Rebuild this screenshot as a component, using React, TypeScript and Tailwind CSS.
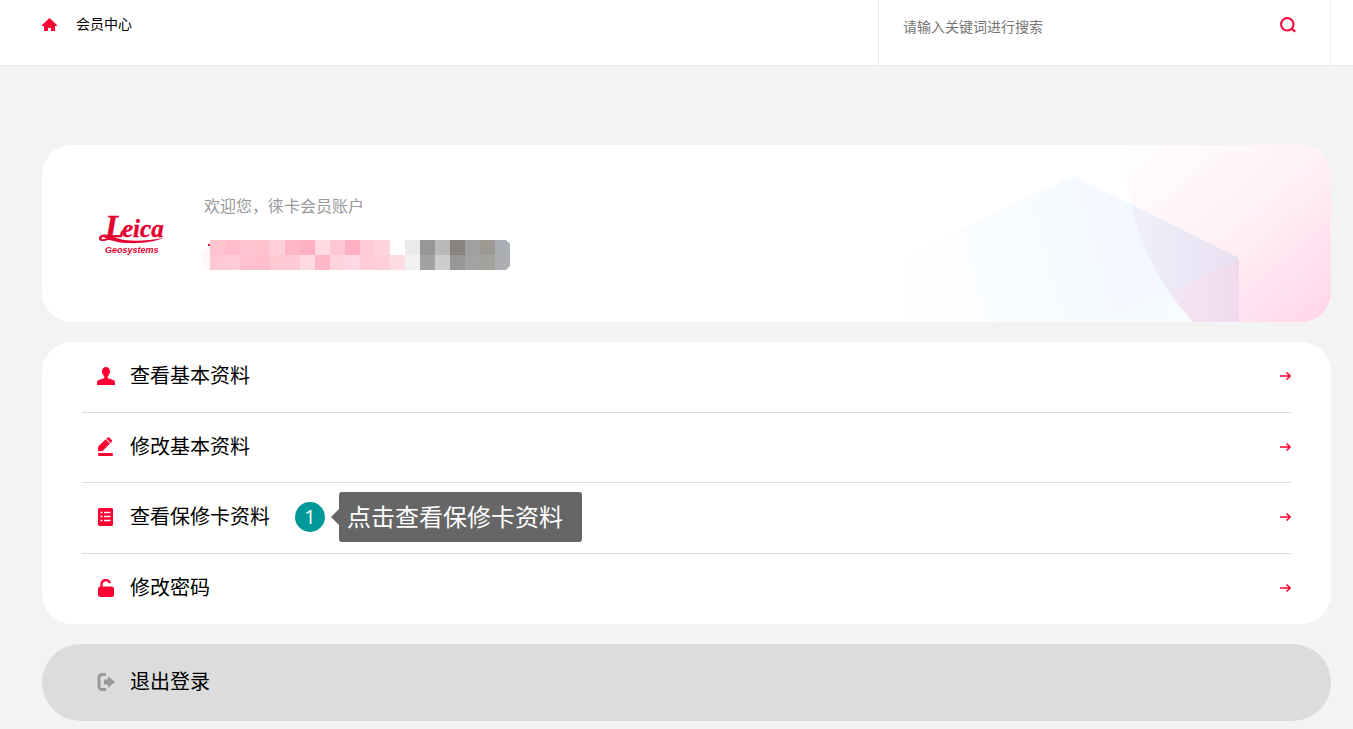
import { ReactNode } from "react";

const mosaicRows = [
  [
    "#ffc4d0", "#ffbdcb", "#ffc6d2", "#ffc3d0", "#ffd0db", "#ffb7c6", "#ffb0c2", "#ffdae3", "#ffc6d3", "#ffb0c3",
    "#ffcbd8", "#ffd4df", "#ffffff", "#ece9ea", "#979797", "#b9b9b9", "#868381", "#9fa1a0", "#9c9993", "#a9afb5",
  ],
  [
    "#ffc8d5", "#ffcbd7", "#ffc0cf", "#ffbfcd", "#ffc9d4", "#ffcad5", "#ffd8e1", "#ffb6c7", "#ffd3de", "#ffd8e3",
    "#ffcbd8", "#ffcfda", "#ffdbe4", "#f2f1f0", "#a2a2a2", "#cfcdcb", "#979797", "#a2a4a3", "#a4a29d", "#adaeb2",
  ],
];

const HomeIcon = () => (
  <svg width="15" height="13" viewBox="0 0 15 13" fill="#ff0032">
    <path d="M7.500 0 15 7v.9h-2V13H9V10H6v3H2V7.900H0V7z" />
  </svg>
);

const SearchIcon = () => (
  <svg width="16" height="16" viewBox="0 0 16 16" fill="none" stroke="#ff0032" strokeWidth="2">
    <circle cx="7.300" cy="7.300" r="6.200" />
    <path d="m11.500 11.500 3.700 3.300" strokeWidth="2.200" />
  </svg>
);

const UserIcon = () => (
  <svg width="18" height="18" viewBox="0 0 18 18" fill="#ff0032">
    <path d="M9 0c2.500 0 4 1.700 4 4.200 0 1.900-.9 3.800-2.200 4.800v2.200l5 1.500c1.400.5 2.200 1.300 2.200 2.700V18H0v-2.600c0-1.400.8-2.200 2.200-2.700l5-1.500V9C5.900 8 5 6.100 5 4.200 5 1.700 6.500 0 9 0z" />
  </svg>
);

const EditIcon = () => (
  <svg width="18" height="19" viewBox="0 0 18 19" fill="#ff0032">
    <path d="M10.200.7c.7-.7 1.600-.7 2.300 0l2 2c.7.7.7 1.600 0 2.300l-.9.900-4.300-4.300z" />
    <path d="m8.600 2.300 4.300 4.300-6.300 6.500c-.8.8-1.500 1.200-2.600 1.200H1v-3.100c0-1.100.4-1.800 1.200-2.600z" />
    <rect x="1" y="16" width="15" height="3" rx="1.200" />
  </svg>
);

const ListIcon = () => (
  <svg width="18" height="18" viewBox="0 0 18 18">
    <rect x="1" width="15" height="18" rx="1.500" fill="#ff0032" />
    <path
      d="M3.500 4.500h2M7 4.500h6.500M3.500 8.500h2M7 8.500h6.500M3.500 12.500h2M7 12.500h6.500"
      stroke="#fff"
      strokeWidth="1.600"
    />
  </svg>
);

const UnlockIcon = () => (
  <svg width="18" height="18" viewBox="0 0 18 18">
    <path d="M4.500 9V5.500a4.300 4.300 0 0 1 8.400-1.300" fill="none" stroke="#ff0032" strokeWidth="2.300" />
    <rect x="1" y="7.500" width="16" height="10.500" rx="2.500" fill="#ff0032" />
  </svg>
);

const LogoutIcon = () => (
  <svg width="18" height="18" viewBox="0 0 18 18">
    <path
      d="M9 1.500H5a3 3 0 0 0-3 3v9a3 3 0 0 0 3 3h4"
      fill="none"
      stroke="#999"
      strokeWidth="3"
    />
    <path d="M7 6.500h4V3.200L18 9l-7 5.800v-3.300H7z" fill="#999" />
  </svg>
);

const ArrowIcon = () => (
  <svg width="11" height="8" viewBox="0 0 11 8" fill="none" stroke="#ff0032" strokeWidth="1.500">
    <path d="M0 4h10M6.500.5 10.200 4 6.500 7.500" />
  </svg>
);

const Logo = () => (
  <svg
    className="overflow-visible"
    width="68"
    height="44"
    viewBox="0 0 68 44"
    fill="#e4002f"
    role="img"
    aria-label="Leica Geosystems"
  >
    <text
      x="7"
      y="25"
      fontFamily="Liberation Serif"
      fontWeight="700"
      fontStyle="italic"
      fontSize="25"
      stroke="#e4002f"
      strokeWidth="0.4"
    >
      <tspan fontSize="32">L</tspan>
      <tspan x="24">eica</tspan>
    </text>
    <path d="M12 23.500C6 21.500 1 23 1 26.500c0 3 5 3.300 9 1.500 6 .5 9 2.500 18 3 14 .7 28-1 37-5-11 2-24 3.500-36 2.300C21 27.500 17 25 12 23.500zM3.500 26.500c0-1.500 2.500-1.700 5 0-2 1-5 1.200-5 0z" />
    <text x="7" y="41" fontFamily="Liberation Sans" fontWeight="700" fontStyle="italic" fontSize="9">
      Geosystems
    </text>
  </svg>
);

const CardPattern = () => (
  <svg
    className="absolute right-0 top-0 pointer-events-none"
    width="451"
    height="177"
    viewBox="0 0 451 177"
    aria-hidden="true"
  >
    <defs>
      <linearGradient id="pink" gradientUnits="userSpaceOnUse" x1="270" y1="0" x2="431" y2="190">
        <stop offset="0" stopColor="#ffd5e8" stopOpacity="0.06" />
        <stop offset="0.5" stopColor="#ffd5e8" stopOpacity="0.35" />
        <stop offset="1" stopColor="#ffd5e8" />
      </linearGradient>
      <linearGradient id="blue" gradientUnits="userSpaceOnUse" x1="30" y1="130" x2="300" y2="60">
        <stop offset="0" stopColor="#e8f3ff" stopOpacity="0.05" />
        <stop offset="0.6" stopColor="#e8f5ff" stopOpacity="0.45" />
        <stop offset="1" stopColor="#e8f3ff" stopOpacity="0.6" />
      </linearGradient>
      <linearGradient id="violet" gradientUnits="userSpaceOnUse" x1="246" y1="0" x2="359" y2="0">
        <stop offset="0" stopColor="#f0f0fc" />
        <stop offset="1" stopColor="#e8e0f2" />
      </linearGradient>
      <linearGradient id="orchid" gradientUnits="userSpaceOnUse" x1="280" y1="0" x2="359" y2="0">
        <stop offset="0" stopColor="#f4e7f3" />
        <stop offset="1" stopColor="#f1daee" />
      </linearGradient>
      <linearGradient id="fade" gradientUnits="userSpaceOnUse" x1="200" y1="177" x2="320" y2="177">
        <stop offset="0" stopColor="#fff" stopOpacity="0" />
        <stop offset="1" stopColor="#fff" stopOpacity="0.5" />
      </linearGradient>
      <clipPath id="disc">
        <circle cx="501" cy="3" r="256" />
      </clipPath>
    </defs>
    <path d="M192 30 359 113v64H26v-64z" fill="url(#blue)" />
    <path d="M359 113v64H231z" fill="url(#fade)" />
    <circle cx="501" cy="3" r="256" fill="url(#pink)" />
    <g clipPath="url(#disc)">
      <path d="M192 30 359 113v64H26v-64z" fill="url(#violet)" />
      <path d="M359 115v62H231z" fill="url(#orchid)" />
    </g>
  </svg>
);

const Mosaic = () => (
  <svg width="308" height="30" viewBox="0 0 308 30" aria-hidden="true">
    <defs>
      <clipPath id="rounded">
        <path d="M8 0h296l4 4v22l-4 4H8z" />
      </clipPath>
    </defs>
    <path d="M8 6C2 10 0 15 0 20s2 9 4 10h4z" fill="#fff6f8" />
    <rect x="6" y="4" width="2" height="2" fill="#e8202a" />
    <g clipPath="url(#rounded)">
      {mosaicRows.map((row, y) =>
        row.map((fill, x) => (
          <rect key={`${x}-${y}`} x={8 + x * 15} y={y * 15} width="15" height="15" fill={fill} />
        ))
      )}
    </g>
  </svg>
);

const MenuRow = ({ icon, label, children }: { icon: ReactNode; label: string; children?: ReactNode }) => (
  <li className="border-b border-[#dcdcdc] last:border-b-0">
    <a href="#" className="flex h-full items-center pb-px pl-[15px]">
      <span className="w-[33px]">{icon}</span>
      <span className="text-xl text-black">{label}</span>
      {children}
      <span className="ml-auto">
        <ArrowIcon />
      </span>
    </a>
  </li>
);

const StepHint = ({ step, text }: { step: number; text: string }) => (
  <span className="ml-[25px] flex items-center text-white">
    <span className="flex size-[30px] items-center justify-center rounded-full bg-[#009999] text-xl">
      {step}
    </span>
    <svg className="ml-1.5" width="8" height="16" viewBox="0 0 8 16" fill="#666">
      <path d="M8 0v16L0 8z" />
    </svg>
    <span className="flex h-[50px] items-center rounded-[3px] bg-[#666] pl-2 pr-[19px] text-2xl">
      {text}
    </span>
  </span>
);

const App = () => {
  return (
    <div className="min-h-screen bg-[#f3f3f3] pb-2 font-['Open_Sans','Noto_Sans_CJK_SC',sans-serif]">
      <header className="flex h-[66px] justify-between border-b border-[#ebebeb] bg-white pl-[42px] pr-[22px]">
        <nav className="flex h-12 items-center gap-[19px] text-sm text-black">
          <a href="#" aria-label="首页">
            <HomeIcon />
          </a>
          <a href="#">会员中心</a>
        </nav>
        <form className="flex w-[453px] items-start border-x border-[#ebebeb] pl-6 pr-[34px]">
          <input
            type="text"
            aria-label="搜索"
            placeholder="请输入关键词进行搜索"
            className="h-[52px] min-w-0 flex-1 text-sm outline-none placeholder:text-[#757575]"
          />
          <button type="button" aria-label="搜索" className="flex h-[50px] items-center">
            <SearchIcon />
          </button>
        </form>
      </header>

      <main className="ml-[42px] mr-[22px] mt-[79px] space-y-5">
        <section className="relative flex h-[177px] items-center overflow-hidden rounded-[30px] bg-white pl-14">
          <CardPattern />
          <Logo />
          <div className="ml-9 space-y-[22px] pb-1">
            <p className="pl-0.5 text-base text-[#999]">欢迎您，徕卡会员账户</p>
            <Mosaic />
          </div>
        </section>

        <ul className="grid h-[282px] grid-rows-4 rounded-[30px] bg-white px-10">
          <MenuRow icon={<UserIcon />} label="查看基本资料" />
          <MenuRow icon={<EditIcon />} label="修改基本资料" />
          <MenuRow icon={<ListIcon />} label="查看保修卡资料">
            <StepHint step={1} text="点击查看保修卡资料" />
          </MenuRow>
          <MenuRow icon={<UnlockIcon />} label="修改密码" />
        </ul>

        <button
          type="button"
          className="flex h-[77px] w-full items-center rounded-full bg-[#dcdcdc] pb-px pl-[55px] text-xl text-black"
        >
          <span className="w-[33px]">
            <LogoutIcon />
          </span>
          退出登录
        </button>
      </main>
    </div>
  );
};

export default App;
